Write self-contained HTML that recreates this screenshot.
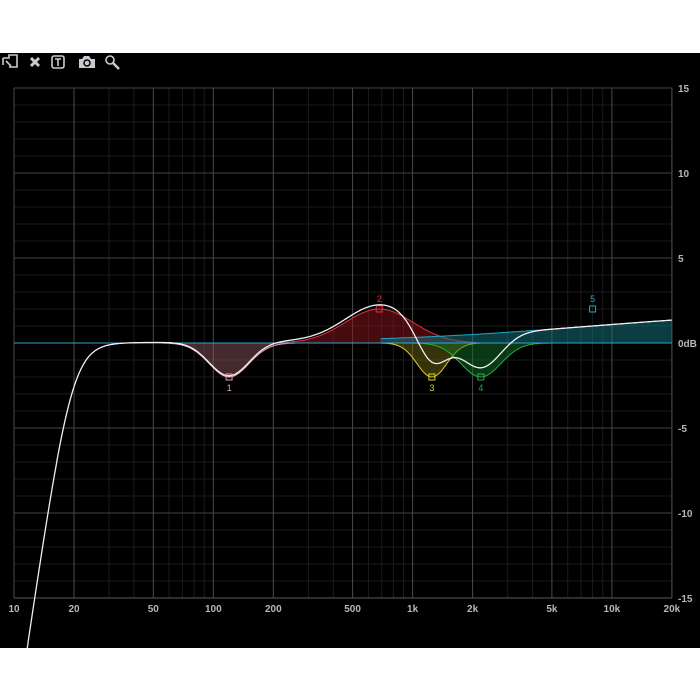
<!DOCTYPE html>
<html><head><meta charset="utf-8"><style>
html,body{margin:0;padding:0;background:#fff;width:700px;height:700px;overflow:hidden}
#bk{position:absolute;left:0;top:53px;width:700px;height:595px;background:#000}
svg{position:absolute;left:0;top:0}
text{font-family:"Liberation Sans",sans-serif;font-weight:bold;font-size:10px;fill:#b4b8bc}
</style></head><body>
<div id="bk"></div>
<svg id="s" width="700" height="700" viewBox="0 0 700 700">
<defs><clipPath id="cp"><rect x="0" y="53" width="700" height="595"/></clipPath></defs>
<g fill="none" stroke="#c8ccd0" stroke-width="1.6">
<path d="M3 58h6v-3h8v12h-8M3 58v7M6 61l5 5"/>
<path d="M31 58l8 8M39 58l-8 8" stroke-width="3"/>
<rect x="52" y="56" width="12" height="12" rx="2"/>
<path d="M55 59h6M58 59v7"/>
<path d="M79 59h3l2-3h5l2 3h4v9h-16z" fill="#c8ccd0" stroke="none"/>
<circle cx="87" cy="63" r="3" stroke="#000" stroke-width="1.5"/>
<circle cx="110" cy="60" r="4"/>
<path d="M113 63l6 6" stroke-width="2.5"/>
</g>
<g id="grid"></g>
<g id="curves" clip-path="url(#cp)"></g>
</svg>
<script>
var X0=14,X1=672,Y0=88,Y1=598,PD=199.3;
function fx(f){return X0+(Math.log10(f)-1)*PD}
function dy(d){return 343-d*17}
var g='';
for(var d=-15;d<=15;d++){var y=dy(d);if(d%5!=0)g+='<line x1="'+X0+'" y1="'+y+'" x2="'+X1+'" y2="'+y+'" stroke="#1a1a1a"/>'}
var fs=[];for(var dec=10;dec<=10000;dec*=10)for(var k=1;k<10;k++){var f=dec*k;if(f<=20000)fs.push([f,k])}fs.push([20000,2]);
fs.forEach(function(a){var x=fx(a[0]).toFixed(1);var maj=(a[1]==1||a[1]==2||a[1]==5);var c=maj?'#4a4a4a':'#1c1c1c';
g+='<line x1="'+x+'" y1="'+Y0+'" x2="'+x+'" y2="'+Y1+'" stroke="'+c+'"/>';});
for(var d=-15;d<=15;d+=5){var y=dy(d);g+='<line x1="'+X0+'" y1="'+y+'" x2="'+X1+'" y2="'+y+'" stroke="#444"/>'}
g+='<line x1="'+X0+'" y1="'+Y1+'" x2="'+X1+'" y2="'+Y1+'" stroke="#5a5a5a"/>';
var lab=[[10,'10'],[20,'20'],[50,'50'],[100,'100'],[200,'200'],[500,'500'],[1000,'1k'],[2000,'2k'],[5000,'5k'],[10000,'10k'],[20000,'20k']];
lab.forEach(function(l){g+='<text x="'+fx(l[0]).toFixed(1)+'" y="612" text-anchor="middle">'+l[1]+'</text>'});
[[15,'15'],[10,'10'],[5,'5'],[0,'0dB'],[-5,'-5'],[-10,'-10'],[-15,'-15']].forEach(function(l){g+='<text x="678" y="'+(dy(l[0])+4)+'">'+l[1]+'</text>'});
document.getElementById('grid').innerHTML=g;
function gau(f,c,gain,s){var t=(Math.log10(f)-Math.log10(c))/s;return gain*Math.exp(-t*t/2)}
var bands=[
{f:function(f){return gau(f,120,-2,0.1)},col:'#f0a0b0',fill:'rgba(150,90,100,0.45)',c:120,g:-2,lbl:'1',lo:55,hi:260},
{f:function(f){return gau(f,680,2,0.17)},col:'#e03040',fill:'rgba(140,20,30,0.5)',c:680,g:2,lbl:'2',lo:220,hi:2100},
{f:function(f){return gau(f,1250,-2,0.075)},col:'#e0d020',fill:'rgba(120,110,20,0.45)',c:1250,g:-2,lbl:'3',lo:690,hi:2200},
{f:function(f){return gau(f,2200,-2,0.1)},col:'#20b040',fill:'rgba(20,110,40,0.5)',c:2200,g:-2,lbl:'4',lo:1000,hi:5000},
{f:function(f){return 2/(1+Math.exp(-(Math.log10(f)-Math.log10(8000))/0.55))},col:'#20a8c8',fill:'rgba(20,120,130,0.5)',c:8000,g:2,lbl:'5',lo:690,hi:20000}
];
var out='';
bands.forEach(function(b){var p='M'+fx(b.lo).toFixed(1)+' 343',q='';
for(var lf=Math.log10(b.lo);lf<=Math.log10(b.hi)+1e-9;lf+=0.005){var f=Math.pow(10,lf);var v=b.f(f);p+='L'+fx(f).toFixed(1)+' '+dy(v).toFixed(1);q+=(q?'L':'M')+fx(f).toFixed(1)+' '+dy(v).toFixed(1);}
p+='L'+fx(b.hi).toFixed(1)+' 343Z';
out+='<path d="'+p+'" fill="'+b.fill+'"/><path d="'+q+'" fill="none" stroke="'+b.col+'" stroke-width="1"/>';});
out+='<line x1="'+X0+'" y1="343" x2="'+X1+'" y2="343" stroke="#2aa8d0" stroke-width="1"/>';
var t='';
for(var lf=1;lf<=4.301;lf+=0.003){var f=Math.pow(10,lf);var v=0;bands.forEach(function(b){v+=b.f(f)});v+=-10*Math.log10(1+Math.pow(19.5/f,8));
var y=dy(v);if(y>700)y=700;t+=(t?'L':'M')+fx(f).toFixed(1)+' '+y.toFixed(1);}
out+='<path d="'+t+'" fill="none" stroke="#f0f0f0" stroke-width="1.3"/>';
bands.forEach(function(b){var x=fx(b.c),y=dy(b.g);out+='<rect x="'+(x-3)+'" y="'+(y-3)+'" width="6" height="6" fill="none" stroke="'+b.col+'"/>';
var ty=b.g>0?y-7:y+14;out+='<text x="'+x+'" y="'+ty+'" text-anchor="middle" style="fill:'+b.col+';font-weight:normal;font-size:9px">'+b.lbl+'</text>';});
document.getElementById('curves').innerHTML=out;
</script>
</body></html>
